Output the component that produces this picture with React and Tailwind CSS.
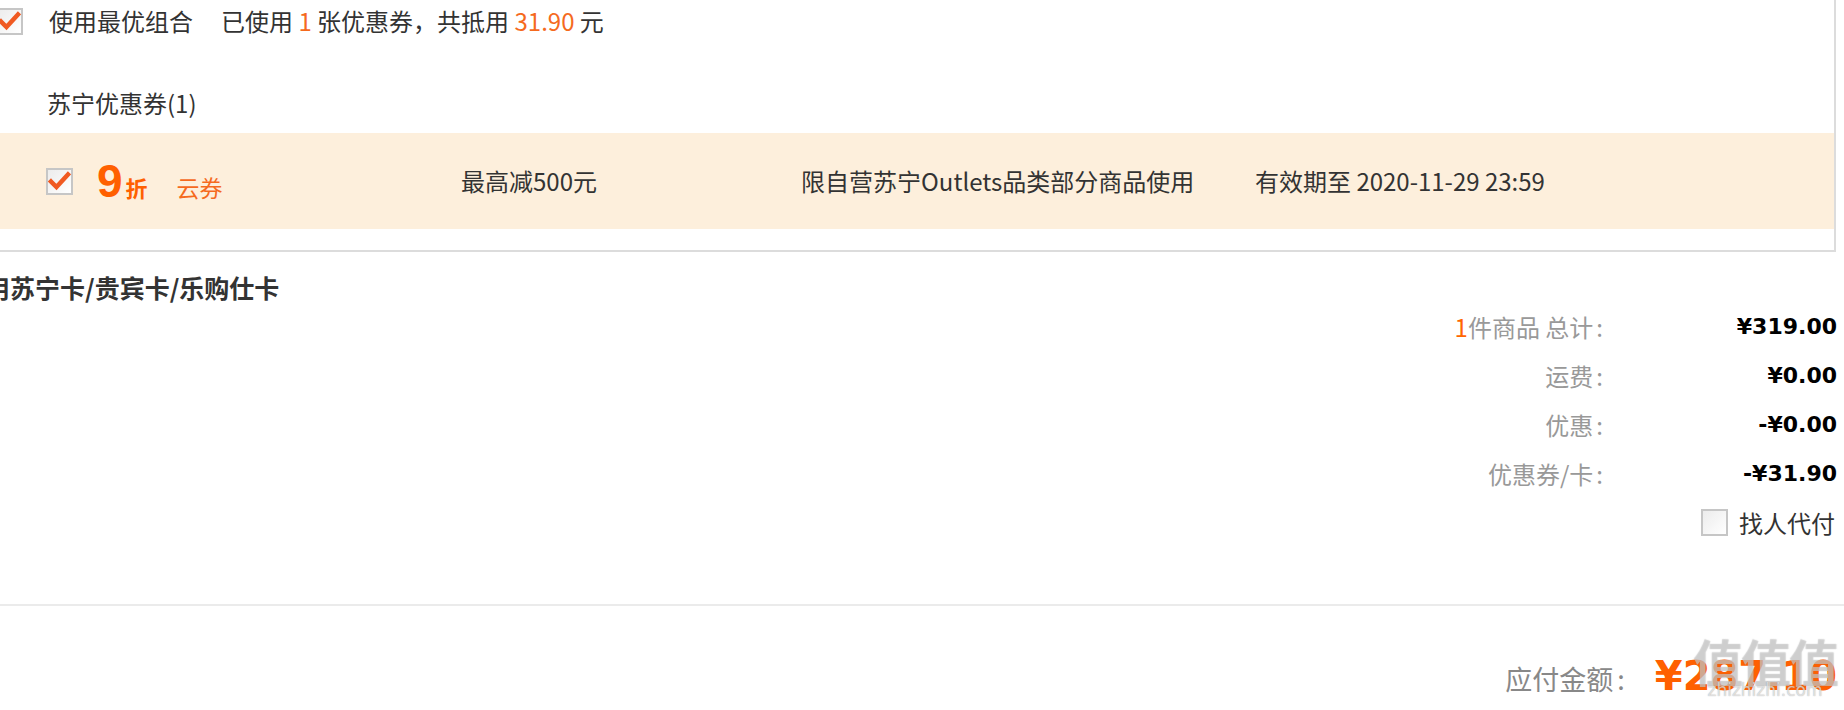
function Check({ checked, className = "" }) {
  return (
    <span
      className={`relative flex h-[27px] w-[27px] shrink-0 items-center justify-center border-2 border-[#c6c6c6] bg-gradient-to-br from-[#ececec] to-white ${className}`}
    >
      {checked && (
        <svg width="23" height="23" viewBox="0 0 23 23" className="absolute left-0 top-0">
          <path
            d="M3 11.5 L8.5 17 L20 4.5"
            fill="none"
            stroke="#f05a22"
            strokeWidth="4.5"
            strokeLinecap="square"
            strokeLinejoin="miter"
          />
        </svg>
      )}
    </span>
  );
}

const rows = [
  { label: (<><span className="text-[#f60]">1</span>件商品 总计</>), value: "¥319.00" },
  { label: "运费", value: "¥0.00" },
  { label: "优惠", value: "-¥0.00" },
  { label: "优惠券/卡", value: "-¥31.90" },
];

export default function App() {
  return (
    <div className="relative h-[710px] w-[1844px] overflow-hidden bg-white font-['Noto_Sans_CJK_SC',sans-serif] text-[#333]">
      {/* coupon box */}
      <div className="h-[252px] w-[1836px] border-b-2 border-r-2 border-[#dcdcdc]">
        <div className="flex h-[42px] items-center">
          <Check checked className="-ml-[4px]" />
          <span className="ml-[26px] text-[24px] leading-[30px]">使用最优组合</span>
          <span className="ml-[28px] text-[24px] leading-[30px]">
            已使用 <span className="text-[#f56a1e]">1</span> 张优惠券，共抵用{" "}
            <span className="text-[#f56a1e]">31.90</span> 元
          </span>
        </div>
        <div className="mt-[46px] pl-[47px] text-[24px] leading-[30px]">苏宁优惠券(1)</div>
        <div className="mt-[15px] flex h-[96px] items-center bg-[#fdefdc] pl-[46px] text-[24px] text-[#333]">
          <div className="flex w-[415px] items-center">
            <Check checked />
            <span className="ml-[24px] flex items-baseline text-[#ff6000]">
              <span className="font-['Liberation_Sans',sans-serif] text-[46px] font-bold leading-none">9</span>
              <span className="ml-[3px] text-[22px] font-bold leading-none">折</span>
              <span className="ml-[29px] text-[23px] leading-none text-[#f56a1e]">云券</span>
            </span>
          </div>
          <div className="w-[340px]">最高减500元</div>
          <div className="w-[454px]">限自营苏宁Outlets品类部分商品使用</div>
          <div>有效期至 2020-11-29 23:59</div>
        </div>
      </div>

      {/* cards heading */}
      <div className="-ml-[40px] mt-[20px] h-[30px] whitespace-nowrap text-[25px] font-bold leading-[30px] text-[#333]">
        使用苏宁卡/贵宾卡/乐购仕卡
      </div>

      {/* summary */}
      <div className="flex flex-col">
        {rows.map((r, i) => (
          <div key={i} className="flex h-[49px] items-center justify-end pr-[7px]">
            <span className="text-[24px] leading-[30px] text-[#999]">
              {r.label}
              <span className="ml-[3px]">:</span>
            </span>
            <span className="w-[234px] text-right font-['DejaVu_Sans',sans-serif] text-[22px] font-bold leading-[30px] text-black">
              {r.value}
            </span>
          </div>
        ))}
        <div className="flex h-[49px] items-center justify-end pr-[9px]">
          <Check />
          <span className="ml-[11px] text-[24px] leading-[30px] text-[#333]">找人代付</span>
        </div>
      </div>

      <div className="mt-[57px] h-[2px] bg-[#ebebeb]" />

      <div className="mt-[50px] flex h-[58px] items-baseline justify-end pr-[7px]">
        <span className="text-[27px] text-[#888]">
          应付金额<span className="ml-[4px]">:</span>
        </span>
        <span className="ml-[30px] font-['DejaVu_Sans',sans-serif] text-[40px] font-bold leading-none text-[#ff6000]">
          ¥287.10
        </span>
      </div>

      {/* watermark overlay */}
      <div className="pointer-events-none absolute left-[1690px] top-[632px] flex w-[150px] flex-col items-center">
        <span className="text-[50px] font-bold leading-[56px] tracking-[-2px] text-white/40 [text-shadow:0_0_1px_rgba(120,120,120,0.6)]">
          值值值
        </span>
        <span className="-mt-[8px] font-['DejaVu_Sans',sans-serif] text-[17px] leading-[20px] text-white/60 [text-shadow:0_0_1px_rgba(100,100,100,0.6)]">
          zhizhizhi.com
        </span>
      </div>
    </div>
  );
}
